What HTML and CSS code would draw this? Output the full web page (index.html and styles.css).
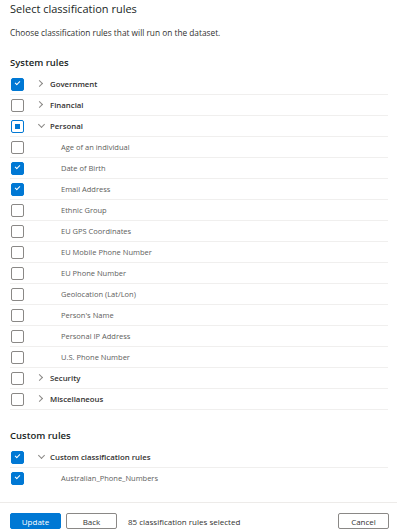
FILE: index.html
```html
<!DOCTYPE html>
<html lang="en">
<head>
    <meta charset="UTF-8">
    <title>Select classification rules</title>
    <link rel="stylesheet" href="styles.css">
</head>
<body>
    <div class="panel">
        <h1>Select classification rules</h1>
        <p class="desc">Choose classification rules that will run on the dataset.</p>

        <h2>System rules</h2>
        <ul class="rules">
            <li class="row group"><span class="cb checked"></span><span class="chev right"></span><span class="label">Government</span></li>
            <li class="row group"><span class="cb"></span><span class="chev right"></span><span class="label">Financial</span></li>
            <li class="row group"><span class="cb partial"></span><span class="chev down"></span><span class="label">Personal</span></li>
            <li class="row child"><span class="cb"></span><span class="label">Age of an individual</span></li>
            <li class="row child"><span class="cb checked"></span><span class="label">Date of Birth</span></li>
            <li class="row child"><span class="cb checked"></span><span class="label">Email Address</span></li>
            <li class="row child"><span class="cb"></span><span class="label">Ethnic Group</span></li>
            <li class="row child"><span class="cb"></span><span class="label">EU GPS Coordinates</span></li>
            <li class="row child"><span class="cb"></span><span class="label">EU Mobile Phone Number</span></li>
            <li class="row child"><span class="cb"></span><span class="label">EU Phone Number</span></li>
            <li class="row child"><span class="cb"></span><span class="label">Geolocation (Lat/Lon)</span></li>
            <li class="row child"><span class="cb"></span><span class="label">Person's Name</span></li>
            <li class="row child"><span class="cb"></span><span class="label">Personal IP Address</span></li>
            <li class="row child"><span class="cb"></span><span class="label">U.S. Phone Number</span></li>
            <li class="row group"><span class="cb"></span><span class="chev right"></span><span class="label">Security</span></li>
            <li class="row group"><span class="cb"></span><span class="chev right"></span><span class="label">Miscellaneous</span></li>
        </ul>

        <h2 class="custom">Custom rules</h2>
        <ul class="rules">
            <li class="row group"><span class="cb checked"></span><span class="chev down"></span><span class="label">Custom classification rules</span></li>
            <li class="row child last"><span class="cb checked"></span><span class="label">Australian_Phone_Numbers</span></li>
        </ul>
    </div>

    <footer class="footer">
        <button class="btn primary">Update</button>
        <button class="btn">Back</button>
        <span class="count">85 classification rules selected</span>
        <button class="btn cancel">Cancel</button>
    </footer>
</body>
</html>
```

FILE: styles.css
```css
body {
    font-family: 'Open Sans', 'Noto Sans', sans-serif;
    margin: 0;
    background: white;
    color: #323130;
}

.panel {
    padding: 1px 9px 0 10px;
}

h1 {
    font-size: 11px;
    font-weight: 400;
    line-height: 16px;
    margin: 0;
    color: #201f1e;
}

.desc {
    font-size: 8.3px;
    line-height: 12px;
    margin: 10px 0 0;
}

h2 {
    font-size: 9.5px;
    font-weight: 600;
    line-height: 14px;
    margin: 17px 0 4px;
    color: #201f1e;
}

h2.custom {
    margin-top: 19px;
}

.rules {
    list-style: none;
    margin: 0;
    padding: 0;
}

.row {
    display: flex;
    align-items: center;
    height: 20px;
    border-bottom: 1px solid #f0efee;
    font-size: 7.5px;
}

.row.last {
    border-bottom: none;
}

.cb {
    width: 11px;
    height: 11px;
    border: 1px solid #8a8886;
    border-radius: 2px;
    margin-left: 1px;
    position: relative;
    flex-shrink: 0;
}

.cb.checked {
    background: #0078d4;
    border-color: #0078d4;
}

.cb.checked::after {
    content: "";
    position: absolute;
    left: 3px;
    top: 2px;
    width: 4px;
    height: 2px;
    border-left: 1px solid white;
    border-bottom: 1px solid white;
    transform: rotate(-45deg);
}

.cb.partial {
    border-color: #0078d4;
}

.cb.partial::after {
    content: "";
    position: absolute;
    left: 3px;
    top: 3px;
    width: 5px;
    height: 5px;
    background: #0078d4;
}

.chev {
    width: 14px;
    height: 10px;
    margin-left: 12px;
    position: relative;
}

.chev::before {
    content: "";
    position: absolute;
    width: 4px;
    height: 4px;
    border-right: 1px solid #8a8886;
    border-bottom: 1px solid #8a8886;
}

.chev.right::before {
    left: 1px;
    top: 2px;
    transform: rotate(-45deg);
}

.chev.down::before {
    left: 3px;
    top: 1px;
    transform: rotate(45deg);
}

.group .label {
    font-size: 7.8px;
    font-weight: 600;
    color: #323130;
}

.child .label {
    margin-left: 37px;
    color: #605e5c;
}

.footer {
    margin-top: 14px;
    border-top: 1px solid #edebe9;
    padding: 10px 8px 0 10px;
    display: flex;
    align-items: center;
}

.btn {
    font-family: inherit;
    font-size: 8px;
    width: 51px;
    height: 16px;
    padding: 0;
    border: 1px solid #8a8886;
    border-radius: 2px;
    background: white;
    color: #323130;
    margin-right: 5px;
}

.btn.primary {
    background: #0078d4;
    border-color: #0078d4;
    color: white;
}

.count {
    font-size: 8px;
    margin-left: 6px;
}

.btn.cancel {
    margin-left: auto;
    margin-right: 0;
}
```
